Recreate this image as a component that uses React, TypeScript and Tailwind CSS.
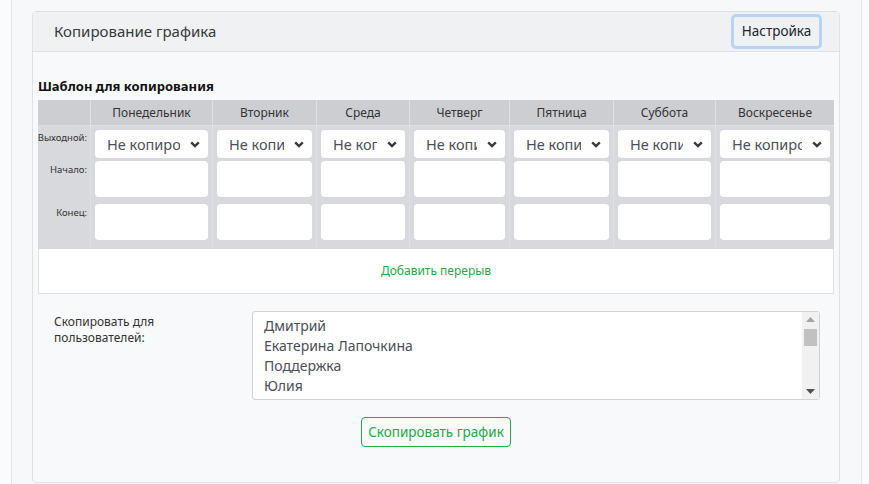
import React from 'react';

const days = ['Понедельник', 'Вторник', 'Среда', 'Четверг', 'Пятница', 'Суббота', 'Воскресенье'];
const users = ['Дмитрий', 'Екатерина Лапочкина', 'Поддержка', 'Юлия'];

const Chevron: React.FC = () => (
  <svg width="10" height="7" viewBox="0 0 10 7" className="shrink-0">
    <path d="M1.2 1.3 L5 5 L8.8 1.3" fill="none" stroke="#343a40" strokeWidth="2.4" />
  </svg>
);

// fake native select, text gets cut before the arrow
const DaySelect: React.FC = () => (
  <div className="flex h-[28px] items-center rounded-[4px] bg-white pl-[12px] pr-[8px]">
    <span className="flex-1 overflow-hidden whitespace-nowrap text-[14.5px] leading-[20px] text-[#495057]">Не копировать</span>
    <span className="ml-[10px]"><Chevron /></span>
  </div>
);

const App: React.FC = () => {
  return (
    <div className="min-h-[484px] bg-[#fafbfc] font-['Noto_Sans',sans-serif] text-[#212529]">
      <div className="ml-[11px] min-h-[484px] w-[851px] border-x border-[#e4e6e9] bg-[#f7f8fa] pl-[20px] pr-[21px] pt-[11px]">
        <div className="rounded-[4px] border border-[#dfe1e4] bg-[#f8f9fa]">
          {/* card header */}
          <div className="flex h-[40px] items-center justify-between border-b border-[#dfe1e4] bg-[#f0f1f3] pl-[21px] pr-[17px]">
            <span className="text-[15px] text-[#343a40]">Копирование графика</span>
            <button className="h-[35px] w-[91px] rounded-[5px] border-[3px] border-[#b6d4f6] text-[13.5px] text-[#212529]">
              Настройка
            </button>
          </div>

          <div className="px-[5px] pt-[25px] pb-[35px]">
            <div className="mb-[5px] text-[13px] font-bold leading-[18px] text-[#111]">Шаблон для копирования</div>

            {/* template table */}
            <div className="grid grid-cols-[52px_122px_104px_93px_100px_104px_102px_119px] bg-[#d8d9dc] text-[#333]">
              <div className="h-[25px] bg-[#cdced2]" />
              {days.map((d) => (
                <div key={d} className="flex h-[25px] items-center justify-center border-l border-[#dfe0e3] bg-[#cdced2] text-[12px]">
                  {d}
                </div>
              ))}

              <div className="flex flex-col items-end border-t border-[#dcdde0] pr-[3px] pt-[5px] text-[9.5px]">
                <div className="leading-[14px]">Выходной:</div>
                <div className="mt-[18px] leading-[14px]">Начало:</div>
                <div className="mt-[29px] leading-[14px]">Конец:</div>
              </div>
              {days.map((d) => (
                <div key={d} className="flex flex-col border-l border-t border-[#dfe0e3] px-[4px] pt-[4px] pb-[9px]">
                  <DaySelect />
                  <div className="mt-[3px] h-[36px] rounded-[4px] bg-white" />
                  <div className="mt-[7px] h-[36px] rounded-[4px] bg-white" />
                </div>
              ))}
            </div>
            <div className="flex h-[45px] items-center justify-center border-x border-b border-[#dee2e6] bg-white text-[12px] text-[#28a745]">
              Добавить перерыв
            </div>

            {/* copy to users */}
            <div className="mt-[17px] flex">
              <div className="w-[214px] pl-[16px] pt-[3px] text-[12px] leading-[16px] text-[#333]">
                Скопировать для
                <br />
                пользователей:
              </div>
              <div className="flex h-[89px] w-[568px] rounded-[3px] border border-[#ced4da] bg-white">
                <div className="flex-1 pl-[11px] pt-[4px] text-[14px] leading-[20px] text-[#495057]">
                  {users.map((u) => (
                    <div key={u}>{u}</div>
                  ))}
                </div>
                <div className="flex w-[17px] flex-col items-center bg-[#f1f1f1] py-[5px]">
                  <svg width="9" height="5" viewBox="0 0 9 5"><path d="M0 5 L4.5 0 L9 5 Z" fill="#a3a3a3" /></svg>
                  <div className="mt-[7px] h-[17px] w-[13px] bg-[#c1c1c1]" />
                  <div className="flex-1" />
                  <svg width="9" height="5" viewBox="0 0 9 5"><path d="M0 0 L9 0 L4.5 5 Z" fill="#505050" /></svg>
                </div>
              </div>
            </div>

            <div className="mt-[17px] flex justify-center">
              <button className="h-[30px] w-[150px] rounded-[4px] border border-[#28a745] text-[13.5px] text-[#28a745]">
                Скопировать график
              </button>
            </div>
          </div>
        </div>
      </div>
    </div>
  );
};

export default App;
